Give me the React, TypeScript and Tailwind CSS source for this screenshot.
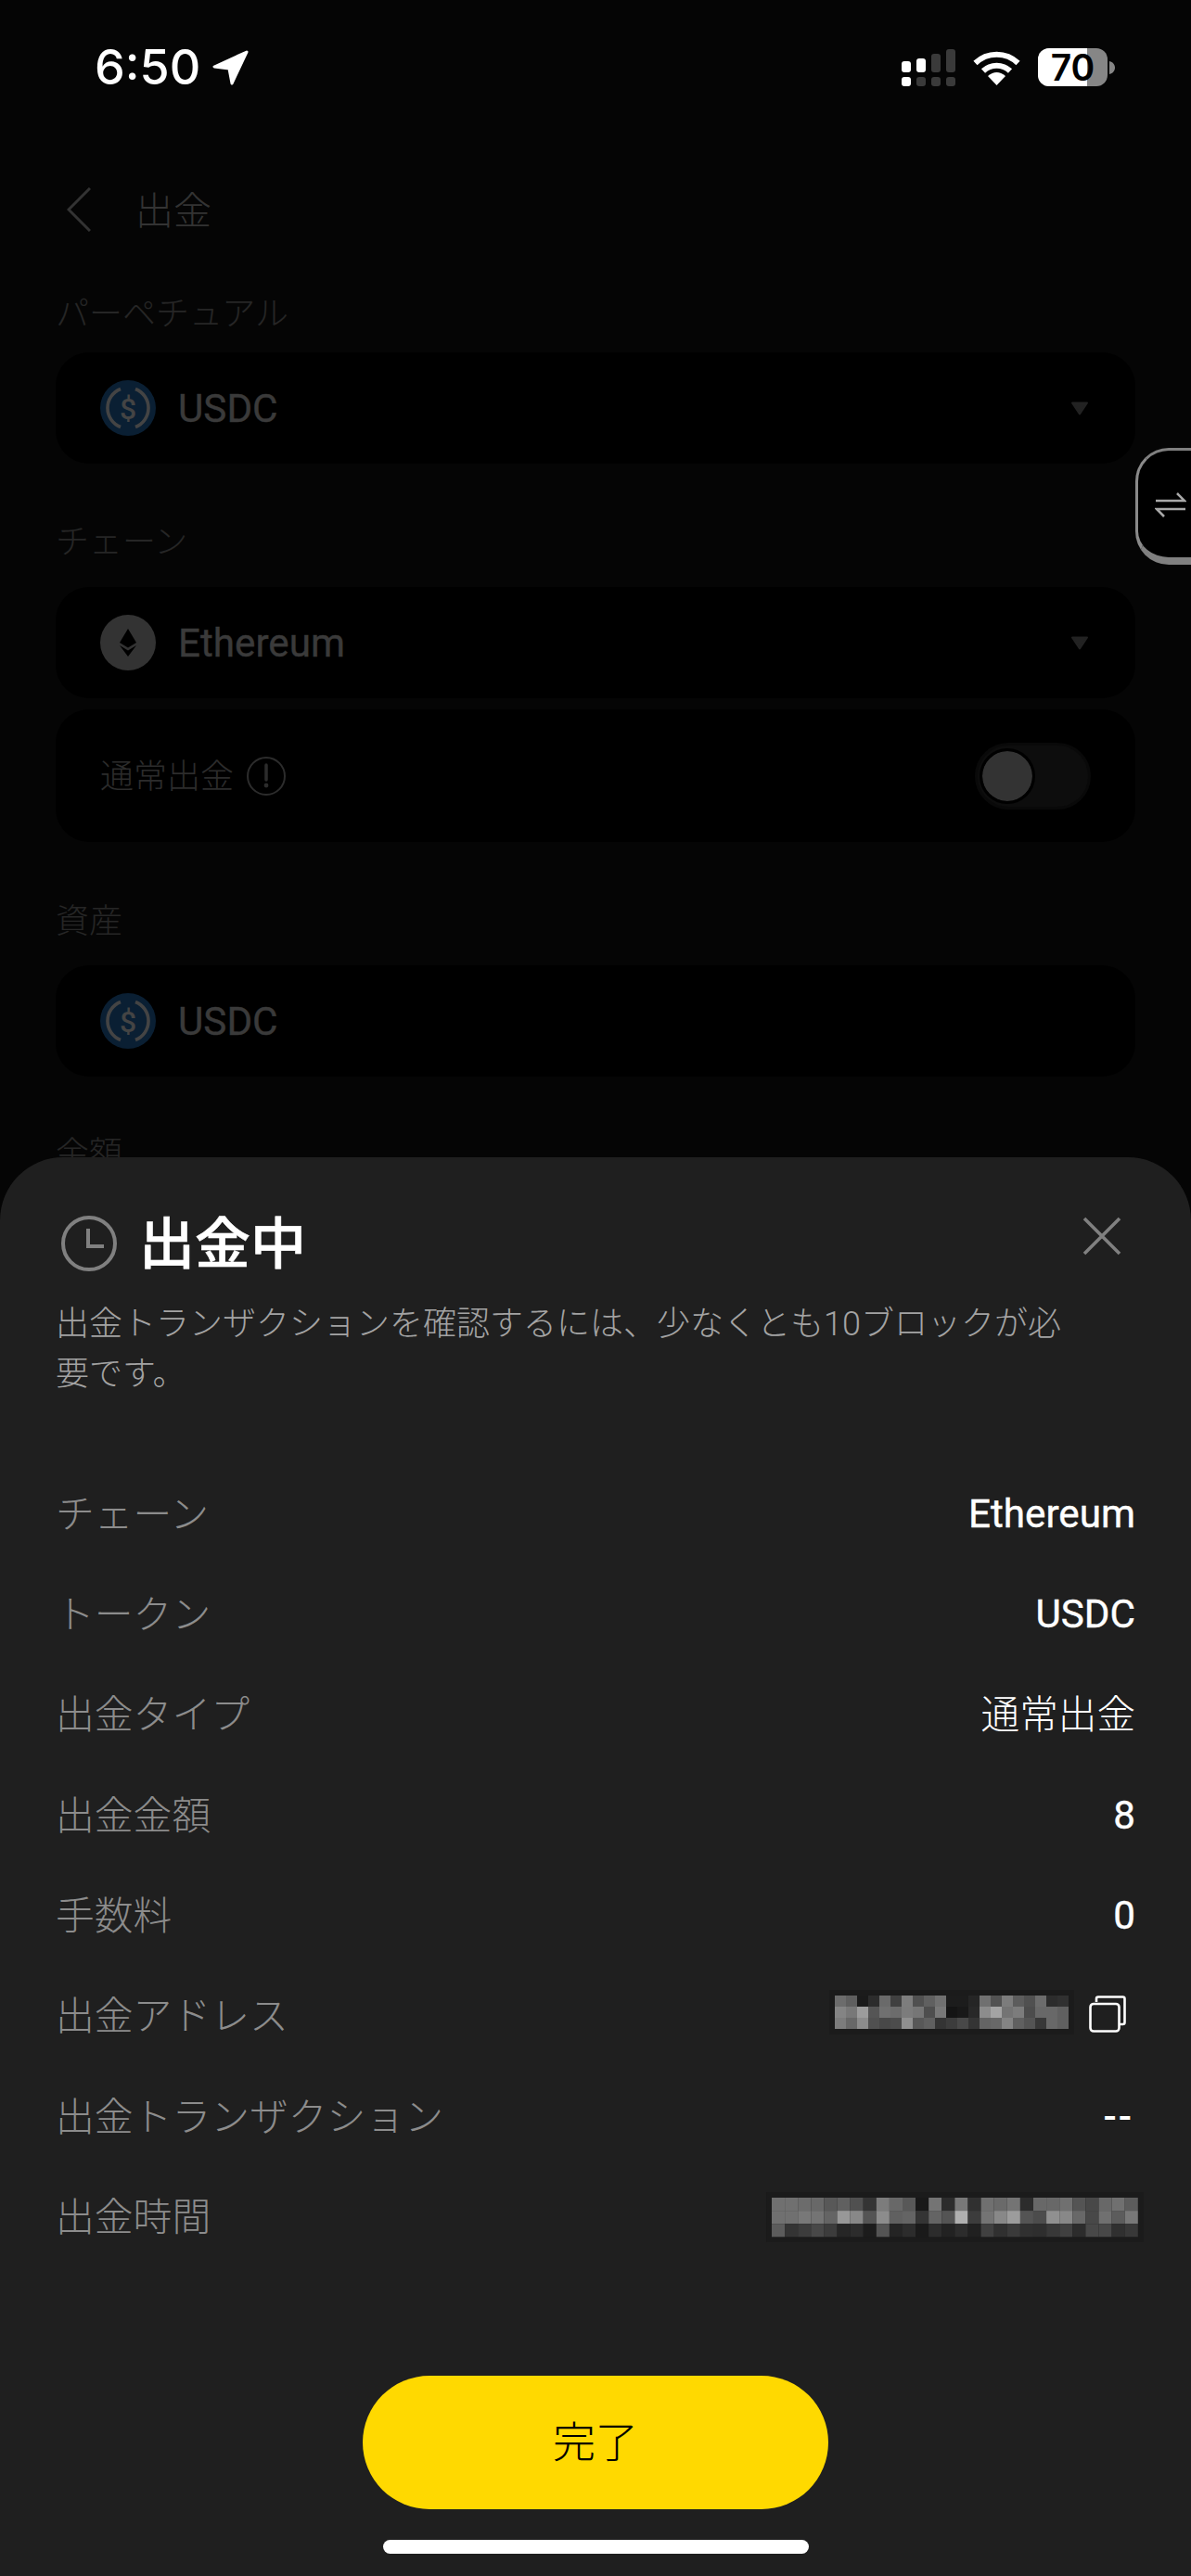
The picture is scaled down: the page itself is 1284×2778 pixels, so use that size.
const rowsA = [
  [0x6c,0x5f,0x1a,0x2c,0x6a,0x40,0x7d,0x50,0x60,0x70,0x1c,0x1c,0x25,0x70,0x52,0x7c,0x5c,0x50,0x6c,0x2c,0x30],
  [0x84,0x78,0x9c,0x55,0x70,0x6c,0x7c,0x76,0x4e,0x78,0x14,0x18,0x28,0x8c,0xa4,0x74,0x7c,0x4c,0x68,0x68,0x60],
  [0x7c,0x68,0x8c,0x50,0x48,0x4c,0x90,0x58,0x60,0x34,0x3c,0x48,0x34,0x64,0x68,0x84,0x60,0x54,0x38,0x68,0x60],
];
const rowsB = [
  [0x70,0x70,0x6c,0x68,0x58,0x60,0x50,0x34,0x7c,0x68,0x58,0x18,0x74,0x2c,0x78,0x30,0x70,0x6a,0x74,0x2c,0x68,0x68,0x70,0x54,0x48,0x68,0x70,0x5c],
  [0x70,0x70,0x78,0x74,0x64,0x98,0x88,0x54,0x8c,0x60,0x64,0x34,0x64,0x54,0xb0,0x3c,0x74,0x88,0x9c,0x54,0x4c,0x90,0x88,0x68,0x48,0x70,0x5c,0x78],
  [0x5c,0x34,0x3c,0x48,0x3c,0x26,0x2c,0x1c,0x54,0x24,0x2c,0x1a,0x2c,0x22,0x2c,0x20,0x40,0x30,0x3a,0x30,0x2e,0x38,0x40,0x2c,0x48,0x48,0x30,0x38],
];

function Mosaic({ rows, size }: { rows: number[][]; size: number }) {
  const w = rows[0].length * size;
  const h = rows.length * size;
  const pad = 6;
  return (
    <svg width={w + pad * 2} height={h + pad * 2} viewBox={`${-pad} ${-pad} ${w + pad * 2} ${h + pad * 2}`} className="block">
      <rect x={-pad} y={-pad} width={w + pad * 2} height={h + pad * 2} fill="#1b1b1b" />
      {rows.map((r, y) =>
        r.map((v, x) => <rect key={`${x}-${y}`} x={x * size} y={y * size} width={size} height={size} fill={`rgb(${v},${v},${v})`} />)
      )}
    </svg>
  );
}

function UsdcIcon() {
  return (
    <svg width="60" height="60" viewBox="0 0 60 60" className="shrink-0">
      <circle cx="30" cy="30" r="30" fill="#0a1f33" />
      <path d="M22 9.5A22 22 0 0 0 22 50.5M38 9.5A22 22 0 0 1 38 50.5" fill="none" stroke="#444" strokeWidth="3.6" />
      <text x="30" y="41.5" textAnchor="middle" fontSize="32" fontWeight="500" fontFamily="Roboto" fill="#444">$</text>
    </svg>
  );
}

function EthIcon() {
  return (
    <svg width="60" height="60" viewBox="0 0 60 60" className="shrink-0">
      <circle cx="30" cy="30" r="30" fill="#333" />
      <path d="M30 15L39 30L30 35.5L21 30Z" fill="#000" />
      <path d="M21 33L30 38.5L39 33L30 45Z" fill="#000" />
    </svg>
  );
}

function Triangle() {
  return (
    <svg width="20" height="15" viewBox="0 0 20 15">
      <path d="M2 1.5H18L10 13.5Z" fill="#222" stroke="#222" strokeWidth="2" strokeLinejoin="round" />
    </svg>
  );
}

function Row({ label, children }: { label: string; children: React.ReactNode }) {
  return (
    <div className="flex h-[108.3px] items-center justify-between">
      <span className="pt-[1px] text-[41.8px] font-light leading-none text-[#8c8c8c]">{label}</span>
      {children}
    </div>
  );
}

export default function App() {
  return (
    <div className="relative h-[2778px] w-[1284px] overflow-hidden bg-[#050505] font-[Roboto,'Noto_Sans_CJK_JP',sans-serif]">
      {/* status bar */}
      <div className="flex h-[93px] items-end justify-between pl-[102px] pr-[82px]">
        <div className="flex h-[41px] items-center gap-[13px]">
          <span className="font-['Inter'] text-[52px] font-medium leading-none text-white">6:50</span>
          <svg width="39" height="38" viewBox="0 0 39 38">
            <path d="M37 2L2 18L18 20L21 36Z" fill="#fff" stroke="#fff" strokeWidth="3" strokeLinejoin="round" />
          </svg>
        </div>
        <div className="flex h-[41px] items-center">
          <svg width="58" height="40" viewBox="0 0 58 40" className="mr-[19px]">
            <rect x="0" y="13" width="10" height="12" rx="3" fill="#fff" />
            <rect x="16" y="10" width="10" height="15" rx="3" fill="#fff" />
            <rect x="32" y="5" width="10" height="20" rx="3" fill="#3a3a3a" />
            <rect x="48" y="0" width="10" height="25" rx="3" fill="#3a3a3a" />
            <rect x="0" y="30" width="10" height="10" rx="3" fill="#fff" />
            <rect x="16" y="30" width="10" height="10" rx="3" fill="#3a3a3a" />
            <rect x="32" y="30" width="10" height="10" rx="3" fill="#3a3a3a" />
            <rect x="48" y="30" width="10" height="10" rx="3" fill="#3a3a3a" />
          </svg>
          <svg width="51" height="38" viewBox="0 0 51 38" className="mr-[19px]">
            <path d="M2.5 14A33 33 0 0 1 48.5 14" fill="none" stroke="#fff" strokeWidth="6" />
            <path d="M11 22.5A21 21 0 0 1 40 22.5" fill="none" stroke="#fff" strokeWidth="6" />
            <path d="M25.5 38L16 28Q25.5 20 35 28Z" fill="#fff" />
          </svg>
          <div className="relative flex h-[41px] w-[75px] items-center justify-center rounded-[12px] bg-[#868686]">
            <div className="absolute inset-y-0 left-0 w-[53px] rounded-l-[12px] bg-white" />
            <span className="relative font-['Inter'] text-[39px] font-semibold leading-none text-black">70</span>
          </div>
          <svg width="7" height="14" viewBox="0 0 7 14" className="ml-[2px] mr-[-1px]">
            <path d="M0 0C4 1 6 4 6 7C6 10 4 13 0 14Z" fill="#868686" />
          </svg>
        </div>
      </div>

      {/* page behind the sheet */}
      <div className="px-[60px]">
        <div className="mt-[109px] flex h-[48px] items-center pl-[12px]">
          <svg width="26" height="48" viewBox="0 0 26 48">
            <path d="M25 1L2 24L25 47" fill="none" stroke="#333" strokeWidth="3" />
          </svg>
          <span className="ml-[48px] pt-[4px] text-[41px] font-light leading-none text-[#333]">出金</span>
        </div>

        <div className="mt-[69px] h-[36px] text-[36px] font-light leading-[41px] text-[#262626]">パーペチュアル</div>
        <div className="mt-[25px] flex h-[120px] items-center justify-between rounded-[36px] bg-black pl-[48px] pr-[50px]">
          <div className="flex items-center gap-[24px]">
            <UsdcIcon />
            <span className="pt-[2px] text-[42.2px] leading-none text-[#3a3a3a] [-webkit-text-stroke:0.4px_currentColor]">USDC</span>
          </div>
          <Triangle />
        </div>

        <div className="mt-[65px] h-[36px] text-[36px] font-light leading-[41px] text-[#262626]">チェーン</div>
        <div className="mt-[32px] flex h-[120px] items-center justify-between rounded-[36px] bg-black pl-[48px] pr-[50px]">
          <div className="flex items-center gap-[24px]">
            <EthIcon />
            <span className="pt-[2px] text-[42.2px] leading-none text-[#3a3a3a] [-webkit-text-stroke:0.4px_currentColor]">Ethereum</span>
          </div>
          <Triangle />
        </div>

        <div className="mt-[12px] flex h-[143px] items-center justify-between rounded-[36px] bg-black pl-[48px] pr-[48px]">
          <div className="flex items-center gap-[14px]">
            <span className="pt-[2px] text-[36px] font-light leading-none text-[#2c2c2c]">通常出金</span>
            <svg width="42" height="42" viewBox="0 0 42 42">
              <circle cx="21" cy="21" r="20" fill="none" stroke="#2c2c2c" strokeWidth="2" />
              <path d="M21 9V25" stroke="#2c2c2c" strokeWidth="3.5" strokeLinecap="round" />
              <circle cx="21" cy="31" r="2.4" fill="#2c2c2c" />
            </svg>
          </div>
          <div className="flex h-[72px] w-[125px] items-center rounded-full border-[3px] border-[#090909] bg-[#0d0d0d] pl-[5px]">
            <div className="h-[54px] w-[54px] rounded-full bg-[#333] outline-[3px] outline-black" />
          </div>
        </div>

        <div className="mt-[66px] h-[36px] text-[36px] font-light leading-[41px] text-[#262626]">資産</div>
        <div className="mt-[31px] flex h-[120px] items-center rounded-[36px] bg-black pl-[48px] pr-[50px]">
          <div className="flex items-center gap-[24px]">
            <UsdcIcon />
            <span className="pt-[2px] text-[42.2px] leading-none text-[#3a3a3a] [-webkit-text-stroke:0.4px_currentColor]">USDC</span>
          </div>
        </div>

        <div className="mt-[64px] h-[36px] text-[36px] font-light leading-[41px] text-[#262626]">金額</div>
      </div>

      {/* swap tab */}
      <div className="absolute left-[1224px] top-[483px] flex h-[126px] w-[60px] items-center justify-center rounded-l-[36px] border-y-[3px] border-b-[8px] border-l-[3px] border-y-[#808080] border-l-[#8a8a8a] bg-black pl-[12px]">
        <svg width="34" height="28" viewBox="0 0 34 28">
          <path d="M1 10H32L24 2M33 19H2L10 27" fill="none" stroke="#a8a8a8" strokeWidth="2.6" />
        </svg>
      </div>

      {/* bottom sheet */}
      <div className="absolute inset-x-0 bottom-0 top-[1248px] rounded-t-[68px] bg-[#1f1f1f] px-[60px] pt-[63px]">
        <div className="flex items-start justify-between">
          <div className="flex h-[60px] items-center gap-[24px] pl-[6px]">
            <svg width="60" height="60" viewBox="0 0 60 60">
              <circle cx="30" cy="30" r="28" fill="none" stroke="#808080" strokeWidth="4" />
              <path d="M29 14V33H46" fill="none" stroke="#808080" strokeWidth="4" />
            </svg>
            <span className="pt-[4px] text-[60px] font-medium leading-none text-white [-webkit-text-stroke:0.6px_currentColor]">出金中</span>
          </div>
          <svg width="42" height="42" viewBox="0 0 42 42" className="mr-[15px] mt-[1px]">
            <path d="M2 2L40 40M40 2L2 40" fill="none" stroke="#808080" strokeWidth="3.6" />
          </svg>
        </div>
        <p className="mt-[30px] w-[1100px] text-[36px] font-light leading-[54px] text-[#a3a3a3]">
          出金トランザクションを確認するには、少なくとも10ブロックが必要です。
        </p>

        <div className="mt-[70px]">
          <Row label="チェーン"><span className="text-[42.2px] leading-none text-white [-webkit-text-stroke:0.4px_currentColor]">Ethereum</span></Row>
          <Row label="トークン"><span className="text-[42.2px] leading-none text-white [-webkit-text-stroke:0.4px_currentColor]">USDC</span></Row>
          <Row label="出金タイプ"><span className="pt-[1px] text-[41.6px] font-light leading-none text-white">通常出金</span></Row>
          <Row label="出金金額"><span className="text-[42.2px] leading-none text-white [-webkit-text-stroke:0.4px_currentColor]">8</span></Row>
          <Row label="手数料"><span className="text-[42.2px] leading-none text-white [-webkit-text-stroke:0.4px_currentColor]">0</span></Row>
          <Row label="出金アドレス">
            <div className="mb-[6px] flex items-center gap-[16px] pr-[10px]">
              <div className="mb-[3px]"><Mosaic rows={rowsA} size={12} /></div>
              <svg width="40" height="40" viewBox="0 0 40 40">
                <path d="M8 7V3.5Q8 1.5 10 1.5H36.5Q38.5 1.5 38.5 3.5V29Q38.5 31 36.5 31H33" fill="none" stroke="#fff" strokeWidth="2.6" />
                <rect x="1.5" y="9" width="31" height="29.5" rx="3.5" fill="none" stroke="#fff" strokeWidth="2.6" />
              </svg>
            </div>
          </Row>
          <Row label="出金トランザクション"><span className="pr-[2px] text-[42px] font-medium leading-none tracking-[2px] text-white">--</span></Row>
          <Row label="出金時間"><div className="-mr-[9px]"><Mosaic rows={rowsB} size={14.1} /></div></Row>
        </div>

        <div className="mx-auto mt-[117px] flex h-[144px] w-[502px] items-center justify-center rounded-full bg-[#ffd900] text-[46px] font-light leading-none text-black">
          完了
        </div>
        <div className="mx-auto mt-[33px] h-[15px] w-[459px] rounded-full bg-white" />
      </div>
    </div>
  );
}
